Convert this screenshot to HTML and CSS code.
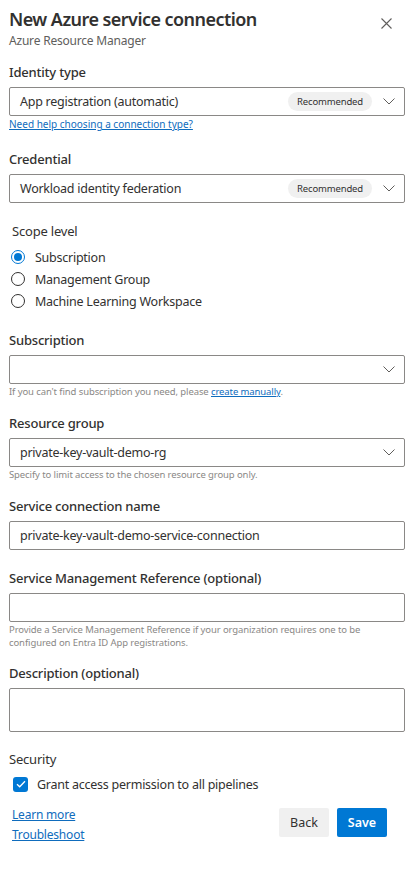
FILE: index.html
```html
<!DOCTYPE html>
<html lang="en">
<head>
    <meta charset="UTF-8">
    <meta name="viewport" content="width=device-width, initial-scale=1.0">
    <title>New Azure service connection</title>
    <link rel="stylesheet" href="styles.css">
</head>
<body>
    <div class="panel">
        <!-- Cabeçalho -->
        <div class="header">
            <div>
                <h1 class="title">New Azure service connection</h1>
                <div class="subtitle">Azure Resource Manager</div>
            </div>
            <button class="close" aria-label="Close">
                <svg width="11" height="11" viewBox="0 0 11 11"><path d="M0.5 0.5L10.5 10.5M10.5 0.5L0.5 10.5" stroke="#605e5c" stroke-width="1.1" fill="none"/></svg>
            </button>
        </div>

        <div class="field first">
            <div class="label">Identity type</div>
            <div class="dropdown">
                <span class="value">App registration (automatic)</span>
                <span class="pill">Recommended</span>
                <svg class="chevron" width="12" height="7" viewBox="0 0 12 7"><path d="M0.5 0.5L6 6L11.5 0.5" stroke="#605e5c" stroke-width="1" fill="none"/></svg>
            </div>
            <a href="#" class="help-link">Need help choosing a connection type?</a>
        </div>

        <div class="field">
            <div class="label">Credential</div>
            <div class="dropdown">
                <span class="value">Workload identity federation</span>
                <span class="pill">Recommended</span>
                <svg class="chevron" width="12" height="7" viewBox="0 0 12 7"><path d="M0.5 0.5L6 6L11.5 0.5" stroke="#605e5c" stroke-width="1" fill="none"/></svg>
            </div>
        </div>

        <div class="field scope">
            <div class="label light">Scope level</div>
            <div class="radio checked"><span class="circle"></span>Subscription</div>
            <div class="radio"><span class="circle"></span>Management Group</div>
            <div class="radio"><span class="circle"></span>Machine Learning Workspace</div>
        </div>

        <div class="field">
            <div class="label">Subscription</div>
            <div class="dropdown">
                <span class="value"></span>
                <svg class="chevron" width="12" height="7" viewBox="0 0 12 7"><path d="M0.5 0.5L6 6L11.5 0.5" stroke="#605e5c" stroke-width="1" fill="none"/></svg>
            </div>
            <div class="hint">If you can't find subscription you need, please <a href="#">create manually</a>.</div>
        </div>

        <div class="field after-hint">
            <div class="label">Resource group</div>
            <div class="dropdown">
                <span class="value">private-key-vault-demo-rg</span>
                <svg class="chevron" width="12" height="7" viewBox="0 0 12 7"><path d="M0.5 0.5L6 6L11.5 0.5" stroke="#605e5c" stroke-width="1" fill="none"/></svg>
            </div>
            <div class="hint">Specify to limit access to the chosen resource group only.</div>
        </div>

        <div class="field after-hint">
            <div class="label">Service connection name</div>
            <input class="textbox" type="text" value="private-key-vault-demo-service-connection">
        </div>

        <div class="field">
            <div class="label">Service Management Reference (optional)</div>
            <input class="textbox" type="text" value="">
            <div class="hint">Provide a Service Management Reference if your organization requires one to be configured on Entra ID App registrations.</div>
        </div>

        <div class="field desc">
            <div class="label">Description (optional)</div>
            <textarea class="textarea"></textarea>
        </div>

        <div class="field security">
            <div class="label light">Security</div>
            <div class="checkbox"><span class="box"><svg width="10" height="8" viewBox="0 0 10 8"><path d="M1 4.2L3.7 6.8L9 1.2" stroke="#fff" stroke-width="1.3" fill="none"/></svg></span>Grant access permission to all pipelines</div>
        </div>

        <!-- Rodapé -->
        <div class="footer">
            <div class="links">
                <a href="#">Learn more</a>
                <a href="#">Troubleshoot</a>
            </div>
            <div class="buttons">
                <button class="btn">Back</button>
                <button class="btn primary">Save</button>
            </div>
        </div>
    </div>
</body>
</html>
```

FILE: styles.css
```css
/* Estilo geral */
body {
    margin: 0;
    font-family: "Noto Sans", "Open Sans", sans-serif;
    background-color: #fff;
    color: #323130;
}

.panel {
    padding: 6px 13px 0 9px;
}

.header {
    display: flex;
    justify-content: space-between;
    align-items: flex-start;
}

.title {
    margin: 0;
    font-size: 18px;
    line-height: 26px;
    font-weight: 600;
    letter-spacing: -0.55px;
    color: #323130;
}

.subtitle {
    font-size: 12px;
    line-height: 18px;
    letter-spacing: -0.2px;
    color: #605e5c;
}

.close {
    background: none;
    border: none;
    padding: 0;
    margin: 12px 13px 0 0;
    width: 11px;
    height: 11px;
    display: flex;
    cursor: pointer;
}

.field {
    margin-top: 18px;
}

.field.first {
    margin-top: 12px;
}

.field.after-hint {
    margin-top: 15px;
}

.field.desc {
    margin-top: 14px;
}

.field.security {
    margin-top: 17px;
}

.label {
    font-size: 13px;
    line-height: 20px;
    font-weight: 500;
    letter-spacing: -0.2px;
    margin-bottom: 5px;
}

.label.light {
    font-weight: 400;
}

.dropdown {
    display: flex;
    align-items: center;
    height: 29px;
    box-sizing: border-box;
    border: 1px solid #8a8886;
    border-radius: 2px;
    padding: 0 9px 0 10px;
}

.dropdown .value {
    flex: 1;
    font-size: 12.5px;
    letter-spacing: -0.25px;
}

.pill {
    background-color: #f0f0f0;
    border-radius: 10px;
    padding: 0 9px;
    font-size: 9.5px;
    line-height: 19px;
    letter-spacing: -0.15px;
    color: #323130;
    margin-right: 11px;
}

.chevron {
    display: block;
}

.help-link {
    display: block;
    font-size: 10px;
    line-height: 14px;
    margin-top: 1px;
    color: #0f6cbd;
}

.hint {
    font-size: 9.5px;
    line-height: 13px;
    margin-top: 1px;
    letter-spacing: -0.1px;
    color: #8a8886;
}

.hint a {
    color: #0f6cbd;
}

.scope .label {
    margin-left: 3px;
}

.radio {
    display: flex;
    align-items: center;
    height: 22px;
    font-size: 12.5px;
    letter-spacing: -0.25px;
    margin-left: 2px;
}

.radio .circle {
    width: 14px;
    height: 14px;
    box-sizing: border-box;
    border: 1px solid #323130;
    border-radius: 50%;
    margin-right: 10px;
    position: relative;
}

.radio.checked .circle {
    border-color: #0078d4;
}

.radio.checked .circle::after {
    content: "";
    position: absolute;
    left: 2px;
    top: 2px;
    width: 8px;
    height: 8px;
    border-radius: 50%;
    background-color: #0078d4;
}

.textbox {
    display: block;
    width: 100%;
    height: 29px;
    box-sizing: border-box;
    border: 1px solid #8a8886;
    border-radius: 2px;
    padding: 0 10px;
    font-family: inherit;
    font-size: 12.5px;
    letter-spacing: -0.25px;
    color: #323130;
    outline: none;
}

.textarea {
    display: block;
    width: 100%;
    height: 44px;
    box-sizing: border-box;
    border: 1px solid #8a8886;
    border-radius: 2px;
    resize: none;
    font-family: inherit;
    outline: none;
}

.checkbox {
    display: flex;
    align-items: center;
    height: 20px;
    margin-top: 1px;
    margin-left: 4px;
    font-size: 12.5px;
    letter-spacing: -0.25px;
}

.checkbox .box {
    width: 15px;
    height: 15px;
    border-radius: 3px;
    background-color: #0078d4;
    display: flex;
    align-items: center;
    justify-content: center;
    margin-right: 9px;
}

.footer {
    display: flex;
    justify-content: space-between;
    margin-top: 11px;
    padding-right: 18px;
}

.links {
    display: flex;
    flex-direction: column;
    margin-left: 3px;
}

.links a {
    font-size: 12px;
    line-height: 20px;
    letter-spacing: -0.2px;
    color: #0f6cbd;
}

.buttons {
    display: flex;
    gap: 8px;
    margin-top: 3px;
}

.btn {
    width: 50px;
    height: 29px;
    border: none;
    border-radius: 2px;
    background-color: #f0f0f0;
    color: #323130;
    font-family: inherit;
    font-size: 12.5px;
    cursor: pointer;
}

.btn.primary {
    background-color: #0078d4;
    color: white;
    font-weight: 600;
}
```
